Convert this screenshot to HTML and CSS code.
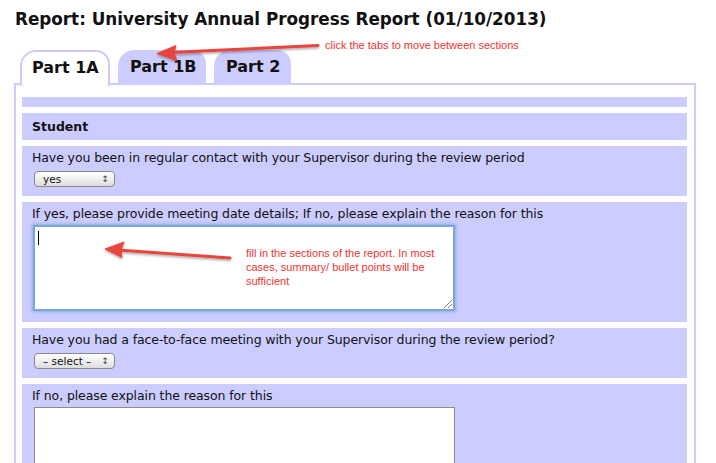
FILE: index.html
```html
<!DOCTYPE html>
<html>
<head>
<meta charset="utf-8">
<link rel="stylesheet" href="styles.css">
</head>
<body>
<div class="page">
  <h1 class="title">Report: University Annual Progress Report (01/10/2013)</h1>
  <div class="tabs">
    <div class="tab active">Part 1A</div>
    <div class="tab">Part 1B</div>
    <div class="tab">Part 2</div>
  </div>
  <div class="panel">
    <div class="row spacer"></div>
    <div class="row head">Student</div>
    <div class="row">
      <div class="label">Have you been in regular contact with your Supervisor during the review period</div>
      <div class="sel"><span class="sel-text">yes</span><span class="sel-arr">&#x2195;</span></div>
    </div>
    <div class="row tall">
      <div class="label">If yes, please provide meeting date details; If no, please explain the reason for this</div>
      <div class="ta focus"><span class="caret"></span><span class="grip"></span></div>
    </div>
    <div class="row">
      <div class="label">Have you had a face-to-face meeting with your Supervisor during the review period?</div>
      <div class="sel"><span class="sel-text">&#8211; select &#8211;</span><span class="sel-arr">&#x2195;</span></div>
    </div>
    <div class="row last">
      <div class="label">If no, please explain the reason for this</div>
      <div class="ta plain"></div>
    </div>
  </div>

  <div class="note note1">click the tabs to move between sections</div>
  <div class="note note2">fill in the sections of the report. In most<br>cases, summary/ bullet points will be<br>sufficient</div>
  <svg class="arrows" width="716" height="463" viewBox="0 0 716 463">
    <defs>
      <filter id="sh" x="-20%" y="-50%" width="140%" height="200%">
        <feDropShadow dx="0" dy="1.5" stdDeviation="1.2" flood-color="#000" flood-opacity="0.35"/>
      </filter>
    </defs>
    <g filter="url(#sh)" fill="#e8453c" stroke="#e8453c">
      <line x1="318" y1="45.5" x2="170" y2="52.5" stroke-width="3" stroke-linecap="round"/>
      <polygon points="157,53.5 176,45.5 174,53 177,60.5" stroke-width="1" stroke-linejoin="round"/>
      <line x1="230" y1="258" x2="118" y2="250" stroke-width="3" stroke-linecap="round"/>
      <polygon points="105,249 124,242 121,250 122,257.5" stroke-width="1" stroke-linejoin="round"/>
    </g>
  </svg>
</div>
</body>
</html>
```

FILE: styles.css
```css
html, body {
  margin: 0;
  padding: 0;
  background: #ffffff;
}
.page {
  position: relative;
  width: 716px;
  height: 463px;
  overflow: hidden;
  font-family: "DejaVu Sans", Verdana, sans-serif;
  color: #111;
}
.title {
  margin: 0;
  padding: 8px 0 0 15px;
  font-size: 16.8px;
  font-weight: bold;
  line-height: 22px;
  letter-spacing: 0;
  white-space: nowrap;
}
.tabs {
  display: flex;
  gap: 8px;
  margin: 20px 0 0 20px;
  height: 33px;
  position: relative;
  z-index: 2;
}
.tab {
  box-sizing: border-box;
  height: 33px;
  padding: 7px 0 0 12px;
  font-size: 16px;
  font-weight: bold;
  background: #ccccff;
  border-radius: 16px 14px 0 0;
  line-height: 20px;
  white-space: nowrap;
}
.tab.active {
  background: #ffffff;
  border: 2px solid #ccccff;
  border-bottom: none;
  height: 36px;
  padding-top: 6px;
  padding-left: 10px;
}
.tabs .tab:nth-child(1) { width: 90px; }
.tabs .tab:nth-child(2) { width: 88px; }
.tabs .tab:nth-child(3) { width: 77px; }
.panel {
  box-sizing: border-box;
  margin-left: 14px;
  width: 682px;
  border: 2px solid #ccccff;
  padding: 12px 7px 0 6px;
  height: 400px;
  display: flex;
  flex-direction: column;
  gap: 6px;
}
.row {
  flex-shrink: 0;
  background: #ccccff;
  padding: 4px 10px 9px 10px;
  font-size: 12.5px;
  line-height: 16px;
}
.row.spacer {
  height: 10px;
  padding: 0;
}
.row.head {
  font-weight: bold;
  height: 27px;
  box-sizing: border-box;
  padding: 6px 10px 0 10px;
}
.row.tall {
  padding-bottom: 11px;
}
.row.last {
  flex: 1 0 auto;
  padding-bottom: 0;
}
.label {
  white-space: nowrap;
  letter-spacing: -0.1px;
}
.sel {
  margin: 5px 0 0 2px;
  width: 81px;
  height: 16px;
  box-sizing: border-box;
  border: 1px solid #8a8a8a;
  border-radius: 4px;
  background: linear-gradient(#ffffff, #ececec 60%, #dcdcdc);
  display: flex;
  align-items: center;
  justify-content: space-between;
  padding: 0 5px 0 8px;
  font-size: 10.5px;
  line-height: 14px;
  color: #111;
}
.sel-arr {
  font-size: 9px;
  color: #444;
}
.ta {
  position: relative;
  box-sizing: border-box;
  width: 422px;
  background: #fff;
  margin-top: 3px;
  margin-left: 1px;
}
.ta.focus {
  height: 86px;
  border: 2px solid #7ba7d7;
  box-shadow: 0 0 3px 1px #88b2e2;
}
.ta.plain {
  height: 80px;
  border: 1px solid #8c8c8c;
  margin-left: 2px;
  width: 421px;
}
.caret {
  position: absolute;
  left: 3px;
  top: 4px;
  width: 1px;
  height: 14px;
  background: #000;
}
.grip {
  position: absolute;
  right: 1px;
  bottom: 1px;
  width: 8px;
  height: 8px;
  background: linear-gradient(135deg, transparent 45%, #888 45%, #888 52%, transparent 52%, transparent 70%, #888 70%, #888 77%, transparent 77%);
}
.note {
  position: absolute;
  font-family: "Liberation Sans", Arial, sans-serif;
  font-size: 11px;
  line-height: 14px;
  color: #ee3333;
  z-index: 3;
}
.note1 { left: 325px; top: 38px; }
.note2 { left: 246px; top: 246px; }
.arrows {
  position: absolute;
  left: 0;
  top: 0;
  z-index: 4;
  pointer-events: none;
}
```
